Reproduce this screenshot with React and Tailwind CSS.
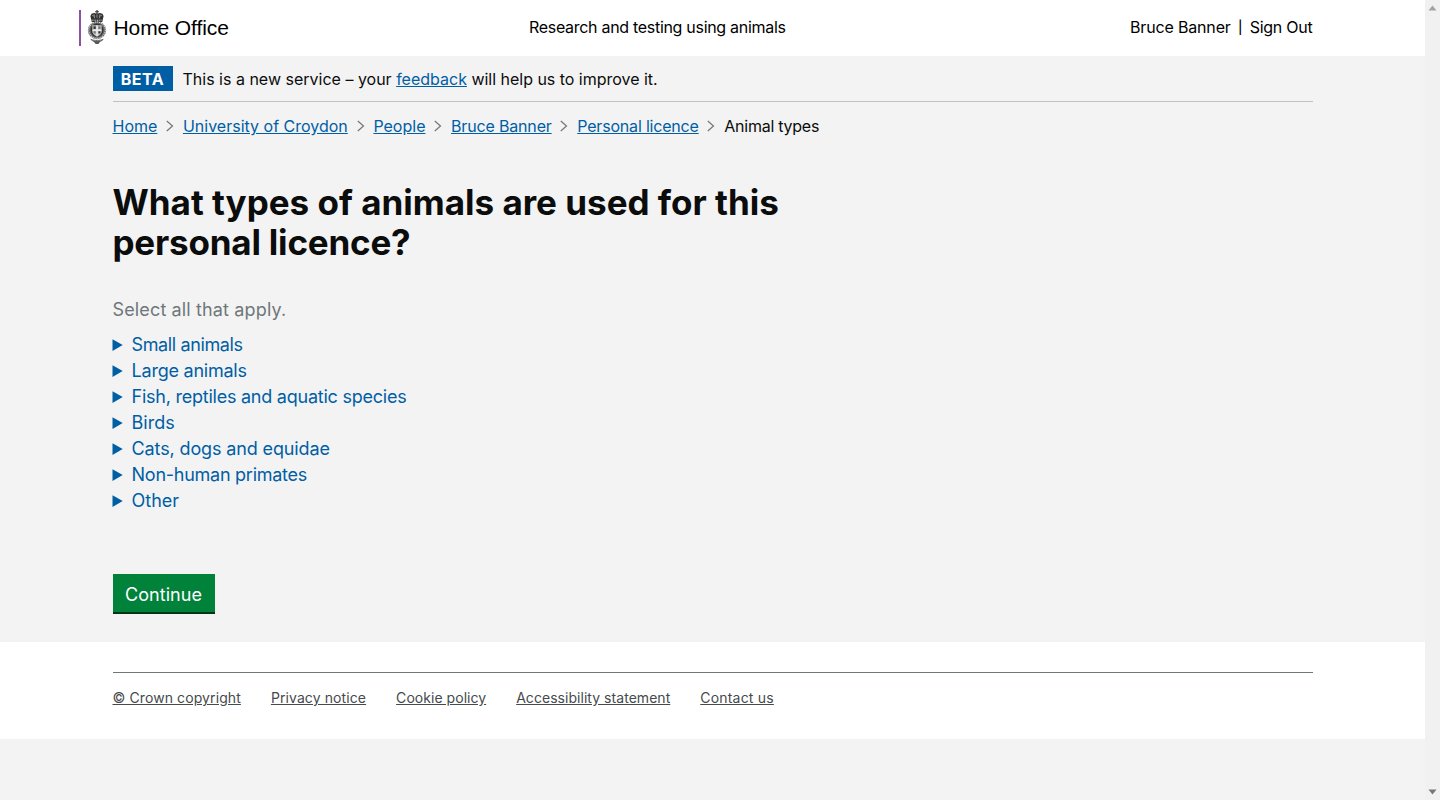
import React from "react";

const crumbs = [
  { label: "Home", cls: "" },
  { label: "University of Croydon", cls: "" },
  { label: "People", cls: "" },
  { label: "Bruce Banner", cls: "tracking-[-0.17px]" },
  { label: "Personal licence", cls: "tracking-[-0.19px]" },
];
const animals = [
  { label: "Small animals", cls: "tracking-[-0.38px]" },
  { label: "Large animals", cls: "tracking-[-0.23px]" },
  { label: "Fish, reptiles and aquatic species", cls: "tracking-[-0.24px]" },
  { label: "Birds", cls: "" },
  { label: "Cats, dogs and equidae", cls: "tracking-[-0.13px]" },
  { label: "Non-human primates", cls: "tracking-[-0.26px]" },
  { label: "Other", cls: "" },
];
const footerLinks = [
  { label: "© Crown copyright", cls: "tracking-[0.1px]" },
  { label: "Privacy notice", cls: "tracking-[0.1px]" },
  { label: "Cookie policy", cls: "tracking-[0.04px]" },
  { label: "Accessibility statement", cls: "tracking-[0.04px]" },
  { label: "Contact us", cls: "tracking-[0.2px]" },
];

// rough engraving of the royal crest
function Crest() {
  return (
    <svg width="20" height="34" viewBox="0 0 20 35" className="block">
      {/* crown */}
      <path d="M9.4 0h1.2v1.2H12v1.1h-1.4v1.4l2.4-.6 2.6.8 1.2 2.2-.8 3.8-.6 2.4H4.6L4 9.9l-.8-3.8 1.2-2.2 2.6-.8 2.4.6V2.3H8V1.2h1.4z" fill="#333" />
      <path d="M5 5.5l2 .8M15 5.5l-2 .8M10 4.5v3.5M7 4.5l.6 4M13 4.5l-.6 4" stroke="#ccc" strokeWidth="0.6" />
      <path d="M4.6 10.5h10.8" stroke="#e5e5e5" strokeWidth="1" strokeDasharray="1 0.8" />
      {/* garter */}
      <ellipse cx="10" cy="20.8" rx="9.4" ry="9.2" fill="#6a6a6a" />
      <ellipse cx="10" cy="20.8" rx="8.6" ry="8.4" fill="none" stroke="#e5e5e5" strokeWidth="1.1" strokeDasharray="1.1 1" />
      <ellipse cx="10" cy="20.8" rx="6.6" ry="6.8" fill="#333" />
      {/* shield */}
      <path d="M5.2 15.6h9.6v6.4q0 3.6-4.8 5.2-4.8-1.6-4.8-5.2z" fill="#c8c8c8" />
      <path d="M10 15.6v11.6M5.2 20.8h9.6" stroke="#fff" strokeWidth="0.9" />
      <path d="M6.4 16.8h2.3v2.8H6.4zM11.4 22h2.2v2.2h-2.2z" fill="#333" />
      <path d="M11.4 16.8h2.2v2.8h-2.2zM6.5 22h2.2v2.2H6.5z" fill="#777" />
      {/* motto ribbon */}
      <path d="M3 29.5q7 2.6 14 0l-1.6 2.2q-2.8 .9-4 3.3h-2.8q-1.2-2.4-4-3.3z" fill="#555" />
      <path d="M5 30.8q5 1.6 10 0" stroke="#eee" strokeWidth="0.6" fill="none" strokeDasharray="1 0.7" />
    </svg>
  );
}

function Chevron() {
  return (
    <svg width="10" height="12" viewBox="0 0 10 12" fill="none" stroke="#6f777b" strokeWidth="1.2" className="mx-[7.8px]">
      <path d="M1.8 1 L7.5 6 L1.8 11" />
    </svg>
  );
}

function Scrollbar() {
  return (
    <div className="w-[15px] shrink-0 bg-[#f1f1f1] flex flex-col justify-between items-center py-[5px]">
      <svg width="9" height="6" viewBox="0 0 9 6" className="block"><path d="M4.5 0.5L8.5 5.5H0.5z" fill="#a3a3a3" /></svg>
      <svg width="9" height="6" viewBox="0 0 9 6" className="block"><path d="M0.5 0.5H8.5L4.5 5.5z" fill="#787878" /></svg>
    </div>
  );
}

export default function App() {
  return (
    <div className="flex h-screen overflow-hidden">
      <div className="flex-1 min-w-0 bg-[#f3f3f3] text-[#0b0c0c] text-[16px] leading-6 font-['Inter',sans-serif]">
        <header className="bg-white h-14">
          <div className="max-w-[1200px] mx-auto h-full flex items-center pb-[2px]">
            <div className="flex items-center h-9 ml-[-34px] w-[450.5px] shrink-0 mt-[2px]">
              <div className="h-9 border-l-2 border-[#8f4fa8] pl-[6px] flex items-start">
                <Crest />
              </div>
              <span className="ml-[7px] font-['Liberation_Sans',sans-serif] text-[21px] tracking-[-0.1px] text-black">Home Office</span>
            </div>
            <div className="text-black tracking-[-0.3px]">Research and testing using animals</div>
            <div className="text-black ml-auto flex items-center">
              <span className="tracking-[-0.17px]">Bruce Banner</span>
              <span className="mx-[7px] w-[5px] text-center text-[13px] font-medium leading-none">|</span>
              <span className="tracking-[-0.25px]">Sign Out</span>
            </div>
          </div>
        </header>

        <main className="max-w-[1200px] mx-auto pt-[10px] pb-7">
          <div className="flex items-center pb-[10px] border-b border-[#bfc1c3]">
            <strong className="bg-[#005ea5] text-white font-bold tracking-[0.5px] h-[25px] w-[60px] justify-center flex items-center">BETA</strong>
            <p className="ml-[10px]">
              This is a new service – your <a href="#" className="text-[#005ea5] underline">feedback</a>{" "}
              <span className="tracking-[-0.02px]">will help us to improve it.</span>
            </p>
          </div>

          <nav className="flex items-center mt-[12px]">
            {crumbs.map((c) => (
              <React.Fragment key={c.label}>
                <a href="#" className={"text-[#005ea5] underline " + c.cls}>{c.label}</a>
                <Chevron />
              </React.Fragment>
            ))}
            <span className="tracking-[-0.25px]">Animal types</span>
          </nav>

          <h1 className="mt-[44px] text-[35px] leading-10 font-bold w-[800px]">
            <span className="block">What types of animals are used for this</span>
            <span className="block tracking-[-0.2px]">personal licence?</span>
          </h1>

          <p className="mt-[34px] text-[18px] leading-7 tracking-[0.14px] text-[#6f777b]">Select all that apply.</p>

          <div className="mt-[8px] text-[18px] leading-[26px] text-[#005ea5]">
            {animals.map((a) => (
              <details key={a.label}>
                <summary className={"cursor-pointer " + a.cls}>{a.label}</summary>
              </details>
            ))}
          </div>

          <button className="block mt-[60px] h-10 w-[102px] pt-[3px] bg-[#00823b] text-white text-[18px] tracking-[0.05px] text-center border-b-2 border-[#003618]">
            Continue
          </button>
        </main>

        <footer className="bg-white h-[97px] pt-[30px]">
          <div className="max-w-[1200px] mx-auto border-t border-[#6f777b] pt-[15px] flex gap-[30px] text-[14px] leading-5 text-[#454a4c]">
            {footerLinks.map((l) => (
              <a key={l.label} href="#" className={"underline " + l.cls}>{l.label}</a>
            ))}
          </div>
        </footer>
      </div>
      <Scrollbar />
    </div>
  );
}
